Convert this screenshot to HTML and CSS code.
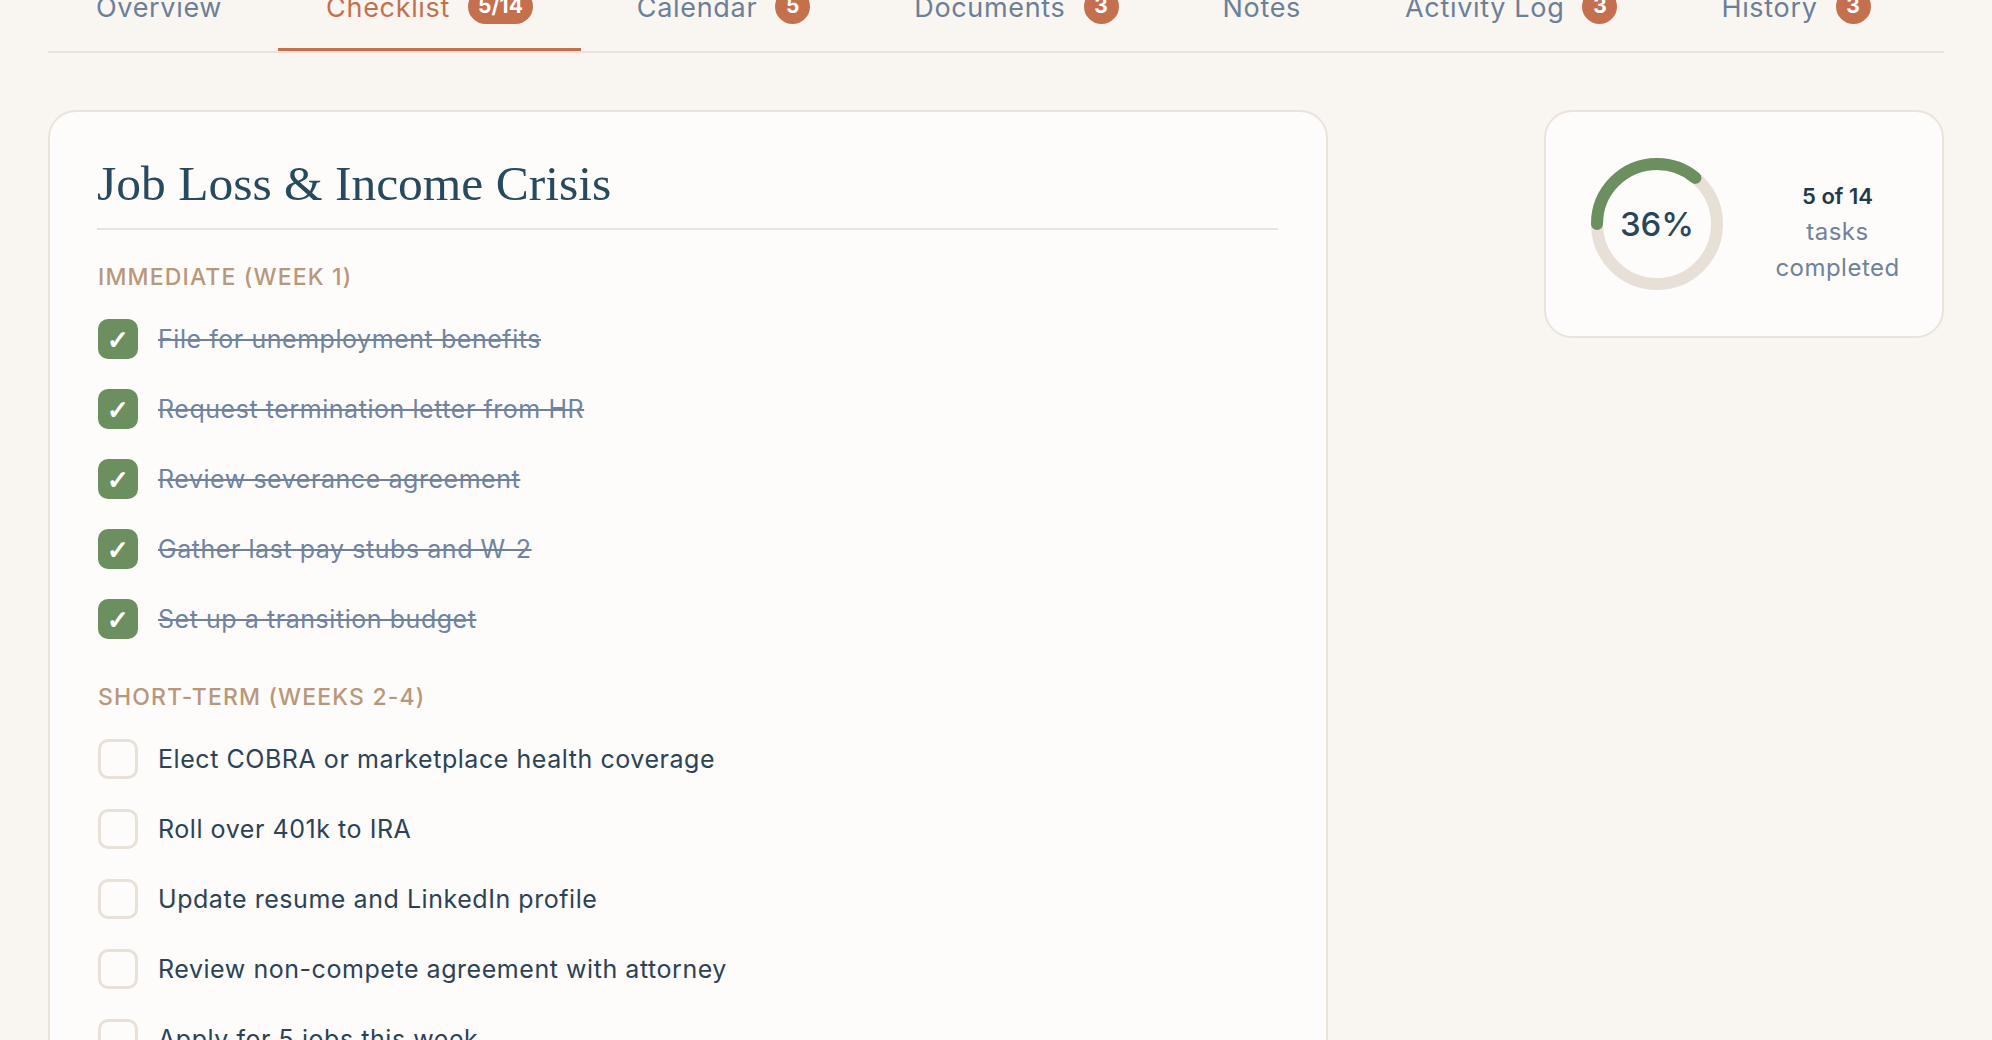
FILE: index.html
```html
<!DOCTYPE html>
<html lang="en">
<head>
<meta charset="utf-8">
<title>Job Loss &amp; Income Crisis — Checklist</title>
<link rel="stylesheet" href="styles.css">
</head>
<body>
<div class="page">
  <nav class="tabs">
    <div class="tab"><span>Overview</span></div>
    <div class="tab active"><span>Checklist</span><span class="badge">5/14</span></div>
    <div class="tab"><span>Calendar</span><span class="badge">5</span></div>
    <div class="tab"><span>Documents</span><span class="badge">3</span></div>
    <div class="tab"><span>Notes</span></div>
    <div class="tab"><span>Activity Log</span><span class="badge">3</span></div>
    <div class="tab"><span>History</span><span class="badge">3</span></div>
  </nav>

  <div class="layout">
    <section class="card main-card">
      <h1 class="title">Job Loss &amp; Income Crisis</h1>

      <div class="group first">
        <h2 class="group-label">IMMEDIATE (WEEK 1)</h2>
        <ul class="items">
          <li class="item done"><span class="box">✓</span><span class="text">File for unemployment benefits</span></li>
          <li class="item done"><span class="box">✓</span><span class="text">Request termination letter from HR</span></li>
          <li class="item done"><span class="box">✓</span><span class="text">Review severance agreement</span></li>
          <li class="item done"><span class="box">✓</span><span class="text">Gather last pay stubs and W-2</span></li>
          <li class="item done"><span class="box">✓</span><span class="text">Set up a transition budget</span></li>
        </ul>
      </div>

      <div class="group">
        <h2 class="group-label">SHORT-TERM (WEEKS 2-4)</h2>
        <ul class="items">
          <li class="item"><span class="box"></span><span class="text">Elect COBRA or marketplace health coverage</span></li>
          <li class="item"><span class="box"></span><span class="text">Roll over 401k to IRA</span></li>
          <li class="item"><span class="box"></span><span class="text">Update resume and LinkedIn profile</span></li>
          <li class="item"><span class="box"></span><span class="text">Review non-compete agreement with attorney</span></li>
          <li class="item"><span class="box"></span><span class="text">Apply for 5 jobs this week</span></li>
        </ul>
      </div>
    </section>

    <aside class="card progress-card">
      <div class="ring">
        <svg class="ring-svg" width="132" height="132" viewBox="0 0 132 132">
          <circle cx="66" cy="66" r="60" fill="none" stroke="#e8e0d7" stroke-width="12"/>
          <circle cx="66" cy="66" r="60" fill="none" stroke="#6b8f5e" stroke-width="12" stroke-linecap="round" stroke-dasharray="135.7 377" transform="rotate(180 66 66)"/>
        </svg>
        <span class="ring-label">36%</span>
      </div>
      <div class="stats">
        <div class="stats-count">5 of 14</div>
        <div class="stats-text">tasks completed</div>
      </div>
    </aside>
  </div>
</div>
</body>
</html>
```

FILE: styles.css
```css
* { box-sizing: border-box; }

html, body {
  margin: 0;
  padding: 0;
  background: #f9f6f2;
  font-family: "Inter", "Noto Sans", sans-serif;
  overflow: hidden;
}

.page {
  padding: 0 48px;
}

/* Tabs */
.tabs {
  display: flex;
  gap: 8px;
  margin-top: -30px;
  border-bottom: 2px solid #ebe3da;
}

.tab {
  display: flex;
  align-items: center;
  gap: 18px;
  padding: 20px 48px 22px;
  font-size: 27px;
  line-height: 36px;
  color: #6b7f99;
  border-bottom: 3px solid transparent;
  letter-spacing: 0.025em;
}

.tab.active {
  color: #c4704f;
  border-bottom-color: #c4704f;
}

.badge {
  display: inline-flex;
  align-items: center;
  justify-content: center;
  min-width: 35px;
  height: 35px;
  padding: 0 10px;
  border-radius: 18px;
  background: #c4704f;
  color: #ffffff;
  font-size: 21px;
  font-weight: 700;
  letter-spacing: 0;
  margin-top: -4px;
}

/* Layout */
.layout {
  display: flex;
  justify-content: space-between;
  align-items: flex-start;
  margin-top: 57px;
}

.card {
  background: #fdfcfa;
  border: 2px solid #ebe3da;
  border-radius: 28px;
}

.main-card {
  width: 1280px;
  padding: 43px 48px 48px 47px;
}

.title {
  margin: 0;
  font-family: "Liberation Serif", "DejaVu Serif", serif;
  font-weight: 400;
  font-size: 49.5px;
  line-height: 58px;
  color: #274a5e;
  padding-bottom: 15px;
  border-bottom: 2px solid #ebe3da;
}

.group { margin-top: 27px; }
.group.first { margin-top: 31px; }

.group-label {
  margin: 0 0 11px;
  font-size: 23px;
  line-height: 32px;
  font-weight: 500;
  letter-spacing: 0.05em;
  color: #b9977b;
  padding-left: 1px;
}

.items {
  list-style: none;
  margin: 0;
  padding: 0;
}

.item {
  display: flex;
  align-items: center;
  gap: 20px;
  padding: 15px 0 15px 1px;
}

.box {
  flex: none;
  width: 40px;
  height: 40px;
  border-radius: 10px;
  border: 3px solid #e9e1d7;
  display: flex;
  align-items: center;
  justify-content: center;
  color: #ffffff;
  font-family: "DejaVu Sans", sans-serif;
  font-size: 26px;
  font-weight: 700;
  line-height: 1;
  -webkit-text-stroke: 1px #ffffff;
  padding-top: 2px;
}

.item.done .box {
  background: #6b8f5e;
  border-color: #6b8f5e;
}

.text {
  font-size: 25px;
  line-height: 32px;
  color: #2b4257;
  letter-spacing: 0.022em;
}

.item.done .text {
  color: #7084a0;
  text-decoration: line-through;
  text-decoration-color: #6f829a;
  text-decoration-thickness: 2px;
}

/* Progress card */
.progress-card {
  width: 400px;
  padding: 46px 30px 46px 45px;
  display: flex;
  align-items: center;
  gap: 40px;
}

.ring {
  display: grid;
  place-items: center;
  flex: none;
}

.ring-svg,
.ring-label {
  grid-area: 1 / 1;
}

.ring-svg { display: block; }

.ring-label {
  font-size: 33px;
  font-weight: 500;
  color: #27465c;
  letter-spacing: 0;
}

.stats {
  flex: 1;
  text-align: center;
  padding-top: 16px;
  font-size: 24px;
  line-height: 36px;
}

.stats-count {
  font-size: 22px;
  font-weight: 600;
  color: #1f3a4f;
}

.stats-text {
  color: #6f829a;
  letter-spacing: 0.02em;
}
```
